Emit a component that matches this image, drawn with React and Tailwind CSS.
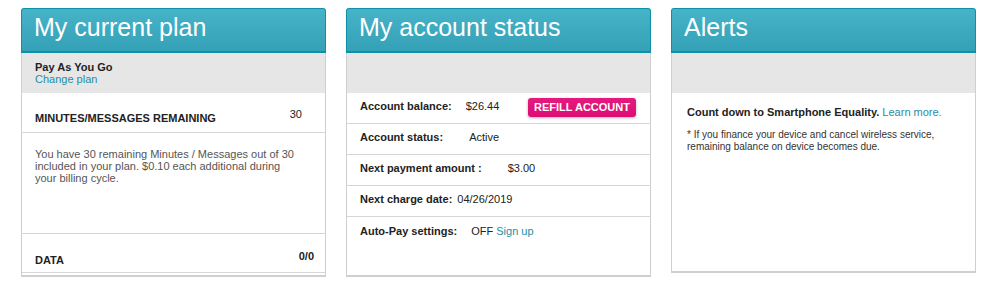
import React from "react";

const PanelHeader = ({ title }) => (
  <div className="h-[45px] rounded-t-[3px] border border-b-2 border-[#0e91a7] bg-gradient-to-b from-[#47b3c8] to-[#34a1b7] pl-[12px] pt-[6px]">
    <h2 className="text-[25px] leading-[25px] text-white">{title}</h2>
  </div>
);

const accountRows = [
  { label: "Account balance:", value: "$26.44", gap: "ml-[14px]", refill: true },
  { label: "Account status:", value: "Active", gap: "ml-[26px]" },
  { label: "Next payment amount :", value: "$3.00", gap: "ml-[26px]" },
  { label: "Next charge date:", value: "04/26/2019", gap: "ml-[5px]" },
];

const App = () => {
  return (
    <div className="flex gap-5 bg-white pl-[21px] pt-2 h-[288px] text-[11px] text-[#222] font-['Liberation_Sans',Arial,sans-serif]">
      {/* current plan */}
      <div className="w-[305px]">
        <PanelHeader title="My current plan" />
        <div className="border-x border-b-2 border-[#cfcfcf] pb-[2px]">
          <div className="h-[40px] bg-[#e6e6e6] pl-[13px] pt-[8px] leading-[12px]">
            <p className="font-bold">Pay As You Go</p>
            <a href="#" className="text-[#1f8ea5]">Change plan</a>
          </div>
          <div className="flex h-[40px] justify-between border-b border-[#d6d6d6] pl-[13px] pr-[23px]">
            <span className="pt-[17px] font-bold">MINUTES/MESSAGES REMAINING</span>
            <span className="pt-[13px]">30</span>
          </div>
          <div className="h-[101px] border-b border-[#d6d6d6] pl-[13px] pr-[24px] pt-[15px] leading-[12px] text-[#555]">
            You have 30 remaining Minutes / Messages out of 30 included in your plan. $0.10 each additional during your billing cycle.
          </div>
          <div className="flex h-[39px] justify-between border-b border-[#d6d6d6] pl-[13px] pr-[11px] font-bold">
            <span className="pt-[18px]">DATA</span>
            <span className="pt-[14px]">0/0</span>
          </div>
        </div>
      </div>

      {/* account status */}
      <div className="w-[305px]">
        <PanelHeader title="My account status" />
        <div className="border-x border-b-2 border-[#cfcfcf]">
          <div className="h-[40px] bg-[#e6e6e6]" />
          {accountRows.map((row) => (
            <div key={row.label} className="flex h-[31px] items-center border-b border-[#d6d6d6] pl-[13px] pr-[14px] pb-[3px]">
              <span className="font-bold">{row.label}</span>
              <span className={row.gap}>{row.value}</span>
              {row.refill && (
                <button className="ml-auto mt-[2px] h-[19px] w-[108px] rounded-[3px] bg-gradient-to-b from-[#e5197f] to-[#dd0c73] text-[11px] font-bold text-white shadow-[0_1px_3px_rgba(0,0,0,0.3)]">
                  REFILL ACCOUNT
                </button>
              )}
            </div>
          ))}
          <div className="h-[58px] pl-[13px] pt-[7px] leading-[14px]">
            <span className="font-bold">Auto-Pay settings:</span>
            <span className="ml-[14px]">OFF </span>
            <a href="#" className="text-[#1f8ea5]">Sign up</a>
          </div>
        </div>
      </div>

      {/* alerts */}
      <div className="w-[305px]">
        <PanelHeader title="Alerts" />
        <div className="h-[220px] border-x border-b-2 border-[#cfcfcf]">
          <div className="h-[40px] bg-[#e6e6e6]" />
          <div className="pl-[15px] pr-[20px] pt-[12px]">
            <p className="leading-[14px]">
              <span className="font-bold">Count down to Smartphone Equality.</span>{" "}
              <a href="#" className="text-[#1f8ea5]">Learn more.</a>
            </p>
            <p className="mt-[10px] text-[10px] leading-[12px] text-[#333]">
              * If you finance your device and cancel wireless service, remaining balance on device becomes due.
            </p>
          </div>
        </div>
      </div>
    </div>
  );
};

export default App;
